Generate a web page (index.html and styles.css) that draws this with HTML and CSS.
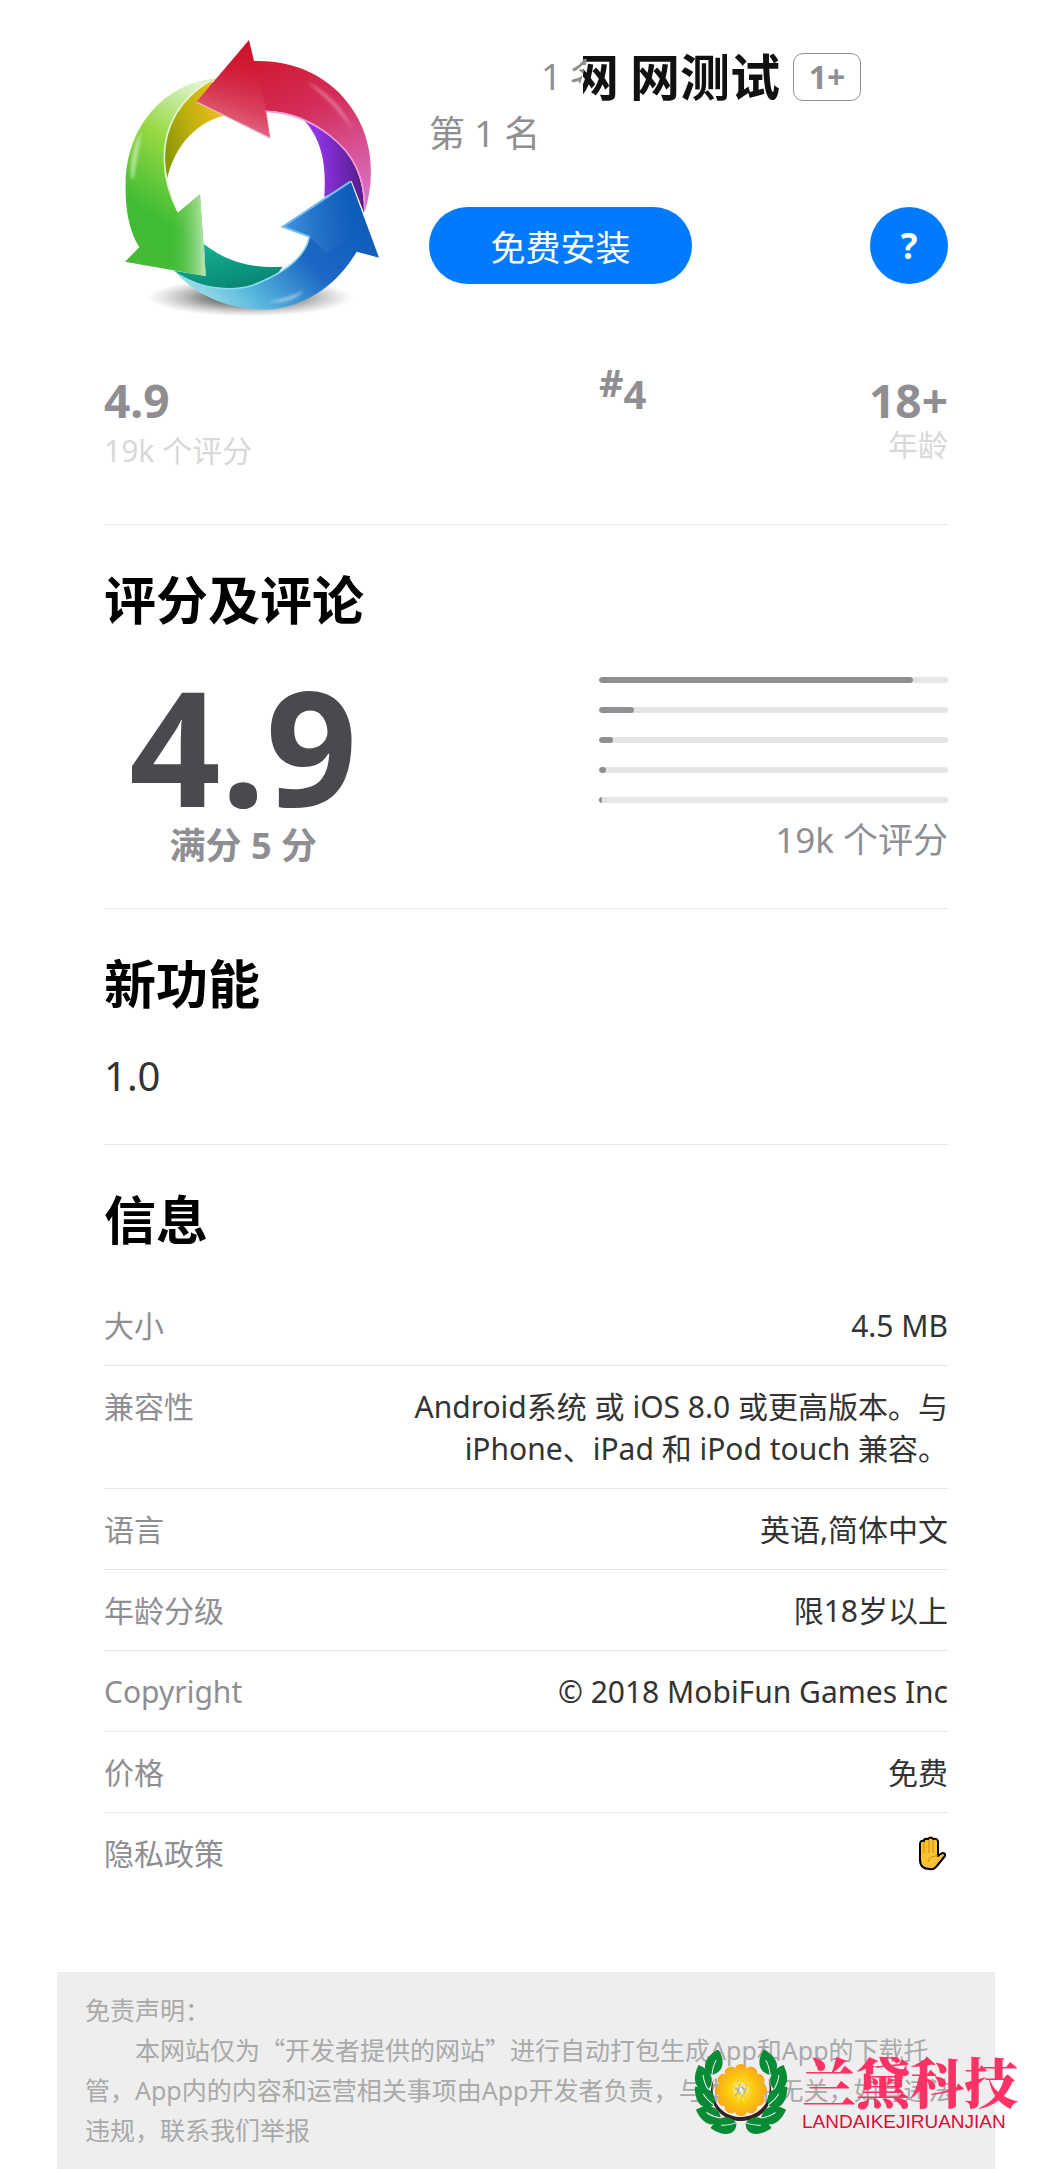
FILE: index.html
```html
<!DOCTYPE html>
<html lang="zh-CN">
<head>
<meta charset="utf-8">
<meta name="viewport" content="width=device-width, initial-scale=1">
<title>网测试</title>
<link rel="stylesheet" href="styles.css">
</head>
<body>
<main class="page">
  <header class="app">
    <svg class="app-icon" viewBox="12 0 900 930" role="img" aria-label="应用图标">
      <defs>
        <linearGradient id="red" x1="0.3" y1="0" x2="0.75" y2="1"><stop offset="0" stop-color="#cf1226"/><stop offset="0.45" stop-color="#d42c58"/><stop offset="1" stop-color="#d873c6"/></linearGradient>
        <linearGradient id="redhead" x1="0.65" y1="0.1" x2="0.4" y2="1"><stop offset="0" stop-color="#d0102a" stop-opacity="0"/><stop offset="1" stop-color="#e58398"/></linearGradient>
        <linearGradient id="green" x1="0.7" y1="0" x2="0.4" y2="1"><stop offset="0" stop-color="#dff3cf"/><stop offset="0.35" stop-color="#97d943"/><stop offset="0.75" stop-color="#3fbc34"/><stop offset="1" stop-color="#45bb38"/></linearGradient>
        <linearGradient id="greenhead" x1="0" y1="0" x2="1" y2="0"><stop offset="0.3" stop-color="#45bb38" stop-opacity="0"/><stop offset="1" stop-color="#bfe8b9"/></linearGradient>
        <linearGradient id="blue" x1="0" y1="0.9" x2="1" y2="0.3"><stop offset="0" stop-color="#b5eeee"/><stop offset="0.3" stop-color="#55b4dc"/><stop offset="0.6" stop-color="#1d68c4"/><stop offset="1" stop-color="#0c59b8"/></linearGradient>
        <linearGradient id="bluehead" x1="0" y1="0" x2="1" y2="0"><stop offset="0" stop-color="#4698e2"/><stop offset="1" stop-color="#1059b8" stop-opacity="0"/></linearGradient>
        <linearGradient id="purple" x1="0" y1="0.4" x2="1" y2="0.3"><stop offset="0.1" stop-color="#9b3df5"/><stop offset="0.5" stop-color="#7c2bc8"/><stop offset="1" stop-color="#521a80"/></linearGradient>
        <linearGradient id="yellow" x1="0.8" y1="0.4" x2="0" y2="0.7"><stop offset="0" stop-color="#e6bd1b"/><stop offset="0.5" stop-color="#beb00d"/><stop offset="1" stop-color="#8b9608"/></linearGradient>
        <linearGradient id="teal" x1="0" y1="0" x2="0.6" y2="1"><stop offset="0" stop-color="#16b795"/><stop offset="1" stop-color="#078674"/></linearGradient>
        <radialGradient id="shade"><stop offset="0" stop-color="#000" stop-opacity="0.95"/><stop offset="0.5" stop-color="#333" stop-opacity="0.5"/><stop offset="1" stop-color="#777" stop-opacity="0"/></radialGradient>
        <filter id="soft"><feGaussianBlur stdDeviation="5"/></filter>
      </defs>
      <ellipse cx="450" cy="832" rx="310" ry="58" fill="url(#shade)"/>
      <path fill="#fff" d="M200 470C220 340 330 270 440 270C580 270 680 380 675 530L628 650C600 720 550 742 490 742C420 742 350 710 312 672Z"/>
      <path fill="url(#yellow)" d="M350 176C240 225 190 320 193 430L202 475C220 390 280 310 370 288L400 250L330 180Z"/>
      <path fill="url(#purple)" d="M600 288C700 320 800 430 792 578L755 483L673 532C680 430 665 350 600 288Z"/>
      <path fill="url(#teal)" d="M312 672C380 725 450 745 548 740C510 800 420 815 340 802C300 795 250 775 222 752L317 768Z"/>
      <path fill="url(#green)" d="M350 174C240 230 190 320 193 420C195 490 215 540 235 577L300 523L317 768L75 725L118 682C85 630 75 560 77 490C80 320 190 190 350 174Z"/>
      <path fill="url(#greenhead)" d="M235 577L300 523L317 768L160 740Z"/>
      <path fill="none" stroke="#e4f8cf" stroke-width="5" d="M330 182C240 235 190 320 193 420C195 490 215 540 235 577"/>
      <path fill="#fff" opacity="0.45" filter="url(#soft)" d="M92 470C90 410 105 360 125 335C115 390 110 430 100 480Z"/>
      <path fill="url(#red)" d="M447 60L462 123C600 118 710 185 765 280C820 370 825 480 793 580C795 470 760 400 690 345C640 305 580 275 497 272L510 355L290 245Z"/>
      <path fill="url(#redhead)" d="M447 60L500 272L510 355L290 245Z"/>
      <path fill="none" stroke="#f79bd4" stroke-width="5" d="M497 274C580 277 640 307 690 347C760 402 795 470 794 570"/>
      <path fill="none" stroke="#f4bac8" stroke-width="4" d="M290 246L510 354"/>
      <path fill="#fff" opacity="0.3" filter="url(#soft)" d="M620 185C690 215 740 280 758 330C710 260 660 220 620 185Z"/>
      <path fill="url(#blue)" d="M752 483L837 713L770 695C720 780 640 850 520 868C400 875 290 830 222 752C300 812 400 815 460 795C550 760 615 715 628 650L548 620Z"/>
      <path fill="url(#bluehead)" d="M752 483L800 615L680 700L628 650L548 620Z"/>
      <path fill="none" stroke="#72bdf3" stroke-width="6" d="M628 650L548 620L752 484"/>
      <path fill="none" stroke="#8ddcee" stroke-width="5" d="M240 766C310 810 400 815 460 795C550 760 615 715 628 650"/>
      <path fill="#fff" opacity="0.45" filter="url(#soft)" d="M505 845C560 835 590 820 610 812C590 840 545 850 505 845Z"/>
    </svg>
    <div class="app-info">
      <h1 class="app-title">
        <span class="rank-echo">1 <span class="rank-cut">名</span></span><span class="title-cut">网</span><span>网测试</span><span class="age-badge">1+</span>
      </h1>
      <p class="app-rank">第 1 名</p>
      <div class="app-actions">
        <button class="install" type="button">免费安装</button>
        <button class="help" type="button" aria-label="帮助">?</button>
      </div>
    </div>
  </header>

  <section class="stats">
    <div class="stat">
      <strong class="stat-value">4.9</strong>
      <span class="stat-label">19k 个评分</span>
    </div>
    <div class="stat stat-place">
      <strong class="stat-value"><span class="hash">#</span>4</strong>
    </div>
    <div class="stat stat-age">
      <strong class="stat-value">18+</strong>
      <span class="stat-label">年龄</span>
    </div>
  </section>

  <section class="block">
    <h2>评分及评论</h2>
    <div class="ratings">
      <div class="score">
        <strong class="score-value">4.9</strong>
        <span class="score-max">满分 5 分</span>
      </div>
      <div class="bars">
        <div class="bar"><div class="bar-fill" style="width:90%"></div></div>
        <div class="bar"><div class="bar-fill" style="width:10%"></div></div>
        <div class="bar"><div class="bar-fill" style="width:4%"></div></div>
        <div class="bar"><div class="bar-fill" style="width:2%"></div></div>
        <div class="bar"><div class="bar-fill" style="width:1%"></div></div>
        <p class="bars-count">19k 个评分</p>
      </div>
    </div>
  </section>

  <section class="block">
    <h2>新功能</h2>
    <p class="version">1.0</p>
  </section>

  <section class="block block-last">
    <h2>信息</h2>
    <dl class="info">
      <div class="row"><dt>大小</dt><dd>4.5 MB</dd></div>
      <div class="row"><dt>兼容性</dt><dd>Android系统 或 iOS 8.0 或更高版本。与 iPhone、iPad 和 iPod touch 兼容。</dd></div>
      <div class="row"><dt>语言</dt><dd>英语,简体中文</dd></div>
      <div class="row"><dt>年龄分级</dt><dd>限18岁以上</dd></div>
      <div class="row"><dt>Copyright</dt><dd>© 2018 MobiFun Games Inc</dd></div>
      <div class="row"><dt>价格</dt><dd>免费</dd></div>
      <div class="row"><dt>隐私政策</dt><dd><a class="privacy" href="#privacy" aria-label="隐私政策"><svg viewBox="0 0 30 36" width="30" height="36"><path fill="#fcc12f" stroke="#000" stroke-width="2" stroke-linejoin="round" d="M2 8Q2 4 6 5Q6 2 10 3Q13 0 15 3Q20 2 20 6V20L24 17Q28 17 27 20L18 31Q15 34 12 33Q2 33 2 24Z"/><path fill="none" stroke="#c38918" d="M6 6V17M11 4V17M15 4V17M10 26Q11 21 17 20H20"/></svg></a></dd></div>
    </dl>
  </section>
</main>

<footer class="disclaimer">
  <p>免责声明：</p>
  <p class="disclaimer-text">本网站仅为<span class="quote">“</span>开发者提供的网站<span class="quote">”</span>进行自动打包生成App和App的下载托管，App内的内容和运营相关事项由App开发者负责，与本网站无关，如有违法违规，联系我们举报</p>
</footer>

<div class="watermark">
  <svg class="wreath" viewBox="0 0 98 88" aria-hidden="true">
    <defs>
      <radialGradient id="orange" gradientUnits="userSpaceOnUse" cx="0" cy="0" r="28"><stop offset="0" stop-color="#fff12d"/><stop offset="0.5" stop-color="#fcc80c"/><stop offset="1" stop-color="#f6a11f"/></radialGradient>
      <g id="leaf"><path fill="#078b35" d="M0 12C-11 9 -11 -4 4 -14C12 -4 12 8 0 12Z"/><path fill="none" stroke="#eee" d="M0 12Q0 3 3 -3"/></g>
      <path id="slice" d="M0 -3L-6 -20Q-6 -26 0 -26Q6 -26 6 -20Z"/>
      <g id="branch">
        <use href="#leaf" transform="translate(21 13) rotate(5)"/>
        <use href="#leaf" transform="translate(10 29) rotate(-30)"/>
        <use href="#leaf" transform="translate(12 48) rotate(-55)"/>
        <use href="#leaf" transform="translate(17 66) rotate(-80)"/>
        <use href="#leaf" transform="translate(33 77) rotate(-110)"/>
      </g>
    </defs>
    <path fill="#351f20" d="M22 28C12 51 28 71 49 71C72 71 86 50 76 28C83 48 69 67 49 67C29 67 16 49 22 28Z"/>
    <g fill="url(#orange)">
      <use href="#slice" transform="translate(49 40)"/>
      <use href="#slice" transform="translate(49 40) rotate(30)"/>
      <use href="#slice" transform="translate(49 40) rotate(60)"/>
      <use href="#slice" transform="translate(49 40) rotate(90)"/>
      <use href="#slice" transform="translate(49 40) rotate(120)"/>
      <use href="#slice" transform="translate(49 40) rotate(150)"/>
      <use href="#slice" transform="translate(49 40) rotate(180)"/>
      <use href="#slice" transform="translate(49 40) rotate(210)"/>
      <use href="#slice" transform="translate(49 40) rotate(240)"/>
      <use href="#slice" transform="translate(49 40) rotate(270)"/>
      <use href="#slice" transform="translate(49 40) rotate(300)"/>
      <use href="#slice" transform="translate(49 40) rotate(330)"/>
    </g>
    <use href="#branch"/>
    <use href="#branch" transform="translate(98 0) scale(-1 1)"/>
  </svg>
  <div class="brand">
    <span class="brand-name">兰黛科技</span>
    <span class="brand-latin">LANDAIKEJIRUANJIAN</span>
  </div>
</div>
</body>
</html>
```
FILE: styles.css
```css
* { box-sizing: border-box; }

body {
  margin: 0;
  position: relative;
  background: #fff;
  color: #333;
  font-family: "Noto Sans", "Noto Sans CJK SC", sans-serif;
}

h1, h2, p, dl, dd { margin: 0; }

button {
  border: 0;
  padding: 0;
  background: #007aff;
  color: #fff;
  font-family: inherit;
}

.page { padding: 20px 104px 0; }

/* App header */
.app { display: flex; }

.app-icon {
  flex: none;
  width: 300px;
  height: 310px;
  margin-right: 25px;
}

.app-info { flex: 1; padding-top: 27px; }

.app-title {
  display: flex;
  align-items: center;
  height: 60px;
  padding-left: 112px;
  color: #111;
  font-size: 50px;
  line-height: 60px;
  white-space: nowrap;
}

.rank-echo {
  display: flex;
  gap: 8px;
  width: 42px;
  color: #8e8e93;
  font-size: 36px;
  font-weight: 400;
}

.rank-cut { clip-path: polygon(0 0, 60% 0, 30% 60%, 0 60%); }

.title-cut {
  display: flex;
  justify-content: flex-end;
  width: 36px;
  margin-right: 11px;
  overflow: hidden;
}

.age-badge {
  width: 68px;
  height: 48px;
  margin-left: 13px;
  border: 1px solid #8e8e93;
  border-radius: 10px;
  color: #8e8e93;
  font-size: 32px;
  line-height: 46px;
  text-align: center;
}

.app-rank {
  color: #8e8e93;
  font-size: 36px;
  line-height: 54px;
}

.app-actions {
  display: flex;
  justify-content: space-between;
  margin-top: 46px;
}

.install {
  width: 263px;
  height: 77px;
  border-radius: 39px;
  font-size: 35px;
}

.help {
  width: 78px;
  height: 77px;
  border-radius: 50%;
  font-size: 35px;
  font-weight: 700;
}

/* Key figures */
.stats {
  display: grid;
  grid-template-columns: 495px 1fr 1fr;
  padding: 40px 0 52px;
  border-bottom: 1px solid #e5e5e5;
  color: #8e8e93;
}

.stat { display: flex; flex-direction: column; }
.stat-value { font-size: 46px; line-height: 60px; }
.stat-label { color: #d8d8d8; font-size: 30px; line-height: 42px; }
.stat-place .stat-value { font-size: 40px; line-height: 48px; }
.hash { font-size: 38px; vertical-align: 12px; line-height: 0; }
.stat-age { text-align: right; }
.stat-age .stat-label { line-height: 30px; }

/* Sections */
.block {
  padding: 43px 0 41px;
  border-bottom: 1px solid #e5e5e5;
}

.block-last { padding-bottom: 79px; border-bottom: 0; }

h2 {
  margin-bottom: 33px;
  color: #000;
  font-size: 52px;
  line-height: 64px;
}

.ratings { display: flex; justify-content: space-between; }

.score {
  display: flex;
  flex-direction: column;
  width: 33%;
  text-align: center;
}

.score-value { color: #4a4a4e; font-size: 160px; line-height: 160px; }
.score-max { color: #8e8e93; font-size: 36px; font-weight: 700; line-height: 42px; }

.bars {
  display: flex;
  flex-direction: column;
  gap: 24px;
  width: 349px;
  padding-top: 12px;
}

.bar { height: 6px; border-radius: 3px; background: #e5e5e5; overflow: hidden; }
.bar-fill { height: 6px; border-radius: 3px; background: #8e8e93; }
.bars-count { margin-top: -8px; color: #8e8e93; font-size: 35px; line-height: 42px; text-align: right; }

.version { font-size: 40px; line-height: 54px; }

/* Information rows */
.row {
  display: flex;
  justify-content: space-between;
  padding: 20px 0 18px;
  border-bottom: 1px solid #e5e5e5;
  font-size: 30px;
  line-height: 42px;
}

.row:last-child { border-bottom: 0; }
.row dt { color: #8e8e93; }
.row dd { max-width: 570px; text-align: right; }
.privacy { display: flex; align-items: center; height: 42px; }

/* Disclaimer */
.disclaimer {
  margin: 0 57px;
  padding: 18px 28px 20px;
  background: #eee;
  color: #a9a9a9;
  font-size: 25px;
  line-height: 40px;
}

.disclaimer-text { text-indent: 2em; }
.quote { font-family: "Noto Sans CJK SC", sans-serif; line-height: 1; }

/* Brand mark laid over the page corner */
.watermark {
  position: absolute;
  right: 32px;
  bottom: 32px;
  display: flex;
  gap: 12px;
}

.wreath { width: 98px; height: 88px; }
.brand { display: flex; flex-direction: column; width: 218px; }

.brand-name {
  color: #ff3266;
  font-family: "Noto Serif CJK SC", "Noto Sans CJK SC", serif;
  font-size: 54px;
  font-weight: 900;
  line-height: 62px;
}

.brand-latin {
  color: #df0b35;
  font-family: "Liberation Sans", sans-serif;
  font-size: 19px;
  line-height: 20px;
}
```
